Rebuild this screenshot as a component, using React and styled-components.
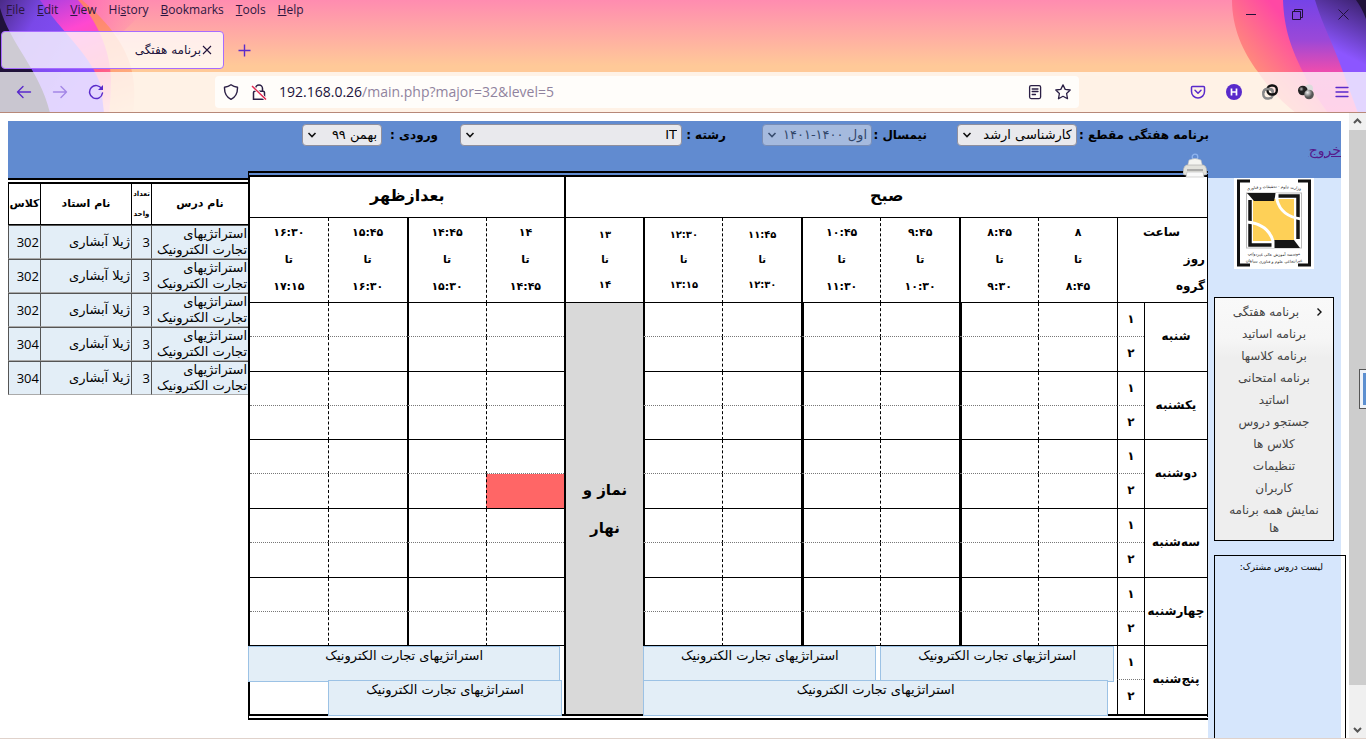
import React from "react";
import styled, { createGlobalStyle } from "styled-components";

const fa = `"DejaVu Sans", sans-serif`;
const ui = `"Open Sans", "Noto Sans", "DejaVu Sans", sans-serif`;

const Global = createGlobalStyle`
  * { box-sizing: border-box; }
  body { margin: 0; background: #fff; font-family: ${fa}; color: #000; }
`;

const Window = styled.div`
  display: flex;
  flex-direction: column;
  min-height: 100vh;
`;

/* ---------- browser chrome ---------- */
const Chrome = styled.header`
  position: relative;
  overflow: hidden;
  border-bottom: 1px solid #b78878;
  background: linear-gradient(#ff8cb0 0px, #ffc998 66px, #ffc998 100%);
`;
const Waves = styled.svg`
  position: absolute;
  top: 0;
  height: 113px;
  width: 150px;
  ${(p) => p.$side}: 0;
`;
const TitleArea = styled.div`
  position: relative;
  display: flex;
  justify-content: space-between;
  height: 28px;
`;
const MenuBar = styled.nav`
  display: flex;
  gap: 12px;
  padding-left: 6px;
`;
const MenuItem = styled.button`
  border: 0;
  padding: 0;
  background: none;
  height: 20px;
  font: 12px/20px ${ui};
  color: #2b1640;
`;
const WindowButtons = styled.div`
  display: flex;
  width: 138px;
`;
const WinButton = styled.button`
  flex: 1;
  border: 0;
  padding: 0;
  background: none;
  display: flex;
  align-items: center;
  justify-content: center;
  color: #20123a;
`;
const TabStrip = styled.div`
  position: relative;
  display: flex;
  align-items: center;
  gap: 12px;
  height: 44px;
  padding: 0 1px;
`;
const Tab = styled.div`
  display: flex;
  align-items: center;
  justify-content: flex-end;
  width: 223px;
  height: 38px;
  padding-right: 10px;
  border: 1px solid #a76cff;
  border-radius: 4px;
  background: rgba(255, 255, 255, 0.78);
  font: 12px/20px ${fa};
  color: #20123a;
`;
const IconButton = styled.button`
  border: 0;
  padding: 0;
  background: none;
  display: flex;
  align-items: center;
  justify-content: center;
  width: ${(p) => p.$w || 16}px;
  height: ${(p) => p.$w || 16}px;
  color: ${(p) => p.$c || "#592acb"};
  opacity: ${(p) => (p.disabled ? 0.45 : 1)};
`;
const Toolbar = styled.div`
  position: relative;
  display: flex;
  align-items: center;
  justify-content: space-between;
  height: 40px;
  padding: 0 16px;
  background: rgba(255, 255, 255, 0.76);
`;
const ToolGroup = styled.div`
  display: flex;
  gap: 20px;
  width: 199px;
  justify-content: ${(p) => (p.$end ? "flex-end" : "flex-start")};
`;
const UrlBar = styled.div`
  display: flex;
  align-items: center;
  flex: 1;
  height: 32px;
  margin-right: 72px;
  padding: 0 8px;
  gap: 12px;
  border-radius: 4px;
  background: rgba(255, 255, 255, 0.8);
`;
const Url = styled.div`
  flex: 1;
  font: 14px/20px ${ui};
  color: #20123a;
  span { color: #90839e; }
`;

/* ---------- viewport ---------- */
const Viewport = styled.div`
  flex: 1;
  display: flex;
  border-bottom: 1px solid #e0d2cb;
`;
const Page = styled.main`
  flex: 1;
  min-width: 0;
  display: flex;
  flex-direction: column;
  padding: 8px 8px 0;
  direction: rtl;
`;
const ScrollBar = styled.div`
  position: relative;
  width: 17px;
  display: flex;
  flex-direction: column;
  align-items: center;
  background: #f0f0f0;
`;
const ScrollArrow = styled.svg`
  width: 17px;
  height: 17px;
  flex: none;
`;
const Thumb = styled.div`
  flex: 555;
  width: 17px;
  background: #cdcdcd;
`;
const Gap = styled.div`
  flex: 36;
`;
const EdgeWidget = styled.div`
  position: absolute;
  top: 256px;
  right: 0;
  width: 7px;
  height: 40px;
  border: 1px solid #555;
  border-right: 0;
  background: #5c8fd0;
  box-shadow: inset 3px 3px 0 #eef2f8, inset 0 -3px 0 #eef2f8;
`;

/* ---------- banner ---------- */
const Banner = styled.div`
  display: grid;
  grid-template-columns: 132px 1fr;
  height: 57px;
  background: #618bd0;
`;
const Exit = styled.a`
  justify-self: start;
  padding-top: 18px;
  font-size: 14px;
  line-height: 22px;
  color: #551a8b;
`;
const Filters = styled.form`
  display: flex;
  align-items: center;
  height: 28px;
`;
const Field = styled.div`
  display: flex;
  align-items: center;
  justify-content: space-between;
  width: ${(p) => p.$w}px;
  margin-left: ${(p) => p.$gap}px;
`;
const FieldLabel = styled.label`
  font-size: 12px;
  font-weight: bold;
  line-height: 24px;
  white-space: nowrap;
`;
const SelectBox = styled.div`
  position: relative;
  flex: none;
  width: ${(p) => p.$w}px;
  opacity: ${(p) => (p.$off ? 0.5 : 1)};
`;
const Select = styled.select`
  appearance: none;
  display: block;
  width: 100%;
  height: 22px;
  padding: 0 4px 0 18px;
  border: 1px solid #8f8f9d;
  border-radius: 4px;
  background: #e9e9ed;
  font: 13px/18px ${fa};
  color: #000;
  opacity: 1;
`;
const Chevron = styled.svg`
  position: absolute;
  left: 5px;
  top: 6px;
  width: 10px;
  height: 10px;
  pointer-events: none;
`;

/* ---------- columns ---------- */
const Columns = styled.div`
  flex: 1;
  display: grid;
  grid-template-columns: 133px 1fr 240px;
`;
const Sidebar = styled.aside`
  display: flex;
  flex-direction: column;
  background: #d6e6fc;
  padding: 0 7px 0 6px;
`;
const Logo = styled.svg`
  display: block;
  align-self: center;
  width: 80px;
  height: 91px;
`;
const SideMenu = styled.ul`
  list-style: none;
  margin: 28px 0 14px;
  padding: 3px 8px 1px;
  border: 1px solid #000;
  background: linear-gradient(#f9f9f9 0px, #f6f6f6 40px, #eee 60px);
  text-align: center;
`;
const SideItem = styled.li`
  position: relative;
  padding: 2px 0;
  font-size: 12px;
  line-height: 18px;
  padding-right: ${(p) => (p.$active ? 16 : 0)}px;
  a { color: #444; text-decoration: none; }
  svg { position: absolute; right: 1px; top: 6px; }
`;
const SharedList = styled.section`
  flex: 1;
  width: 132px;
  padding: 3px 22px;
  border: 1px solid #000;
  border-bottom: 0;
  align-self: flex-end;
  font-size: 9px;
  line-height: 16px;
  white-space: nowrap;
`;

/* ---------- timetable ---------- */
const Board = styled.div`
  position: relative;
  margin-top: -7px;
`;
const Printer = styled.button`
  position: absolute;
  top: -18px;
  right: 0;
  border: 0;
  padding: 0;
  background: none;
  svg { display: block; }
`;
const Timetable = styled.table`
  width: 100%;
  table-layout: fixed;
  border-collapse: separate;
  border-spacing: 0;
  border-style: double solid;
  border-width: 6px 1px 6px 2px;
  border-color: #000;
  background: #fff;
  background-clip: padding-box;
  th, td { text-align: center; }
  td { padding: 0; }
  th { padding: 0 0 2px; }
`;
const LINES = {
  none: "0 none",
  dash: "1px dashed #000",
  thick: "2px solid #000",
  heavy: "3px solid #000",
};
const Period = styled.th`
  height: 41px;
  border-bottom: 1px solid #000;
  border-left: ${(p) => LINES[p.$line]};
  font-size: 16px;
  line-height: 30px;
`;
const Hour = styled.th`
  height: 85px;
  border-bottom: 1px solid #000;
  border-left: ${(p) => LINES[p.$line]};
  font-size: ${(p) => (p.$small ? 10 : 11)}px;
  line-height: ${(p) => (p.$small ? 25 : 27)}px;
`;
const Corner = styled.th`
  border-bottom: 1px solid #000;
  border-left: 1px solid #000;
  font-size: 12px;
  line-height: 27px;
  div { padding-right: 2px; text-align: right; }
  div:first-child { text-align: center; }
`;
const Row = styled.tr`
  height: ${(p) => p.$h}px;
`;
const Day = styled.th`
  border-bottom: ${(p) => (p.$last ? "0" : "1px solid #000")};
  border-left: 1px solid #000;
  font-size: 12px;
`;
const bottomLine = (p) =>
  p.$last ? "0" : p.$first ? "1px dotted #777" : "1px solid #000";
const Group = styled.th`
  border-left: 1px solid #000;
  border-bottom: ${bottomLine};
  font-size: 12px;
  line-height: 20px;
`;
const Slot = styled.td`
  border-left: ${(p) => LINES[p.$line]};
  border-bottom: ${bottomLine};
  background: ${(p) => (p.$busy ? "#f66" : "transparent")};
`;
const Lunch = styled.td`
  border-left: 2px solid #000;
  background: #d9d9d9;
  font-size: 15px;
  font-weight: bold;
  line-height: 38px;
`;
const EventCell = styled.td`
  height: 34px;
  vertical-align: top;
`;
const Event = styled.div`
  position: relative;
  height: 36px;
  margin: 0 ${(p) => p.$lead}px -2px ${(p) => (p.$edge ? -2 : 0)}px;
  border: 1px solid #9cc2e5;
  background: #e3eef7;
  font-size: 13px;
  line-height: 18px;
`;

/* ---------- course list ---------- */
const CourseTable = styled.table`
  width: 100%;
  table-layout: fixed;
  border-collapse: separate;
  border-spacing: 0;
  border-top: 6px double #000;
  align-self: start;
  td { padding: 0 1px; }
  th { padding: 0; }
`;
const CourseHead = styled.th`
  height: 41px;
  border-bottom: 1px solid #000;
  border-left: 1px solid #000;
  font-size: ${(p) => (p.$small ? 7 : 11)}px;
  line-height: 20px;
`;
const CourseCell = styled.td`
  height: 34px;
  border-left: 1px solid #555;
  border-top: 1px solid #555;
  border-bottom: 1px solid #aaa;
  background: #e3eef7;
  font-family: ${(p) => (p.$num ? ui : fa)};
  font-size: 13px;
  line-height: 16px;
  text-align: right;
`;

const COLS = ["dash", "heavy", "dash", "heavy", "dash", "thick", "thick", "dash", "thick", "dash", "none"];
const HOURS = [
  ["۸", "۸:۴۵"], ["۸:۴۵", "۹:۳۰"], ["۹:۴۵", "۱۰:۳۰"], ["۱۰:۴۵", "۱۱:۳۰"],
  ["۱۱:۴۵", "۱۲:۳۰"], ["۱۲:۳۰", "۱۳:۱۵"], ["۱۳", "۱۴"], ["۱۴", "۱۴:۴۵"],
  ["۱۴:۴۵", "۱۵:۳۰"], ["۱۵:۴۵", "۱۶:۳۰"], ["۱۶:۳۰", "۱۷:۱۵"],
];
const DAYS = ["شنبه", "یکشنبه", "دوشنبه", "سه‌شنبه", "چهارشنبه", "پنج‌شنبه"];
const COURSE = "استراتژیهای تجارت الکترونیک";
const EVENTS = {
  "5-0": { 0: [3, 3], 3: [3, 4], 7: [4, 4] },
  "5-1": { 0: [6, 9], 7: [3, 2] },
};
const MENU = [
  "برنامه هفتگی", "برنامه اساتید", "برنامه کلاسها", "برنامه امتحانی", "اساتید",
  "جستجو دروس", "کلاس ها", "تنظیمات", "کاربران", "نمایش همه برنامه ها",
];
const ROOMS = ["302", "302", "302", "304", "304"];

function SlotRow({ day, half }) {
  const events = EVENTS[`${day}-${half}`] || {};
  const out = [];
  let c = 0;
  while (c < 11) {
    if (c === 6) {
      if (day === 0 && half === 0)
        out.push(<Lunch key="lunch" rowSpan={12}>نماز و<br />نهار</Lunch>);
      c += 1;
    } else if (events[c]) {
      const [span, lead] = events[c];
      out.push(
        <EventCell key={c} colSpan={span}>
          <Event $lead={lead} $edge={c + span === 11}>{COURSE}</Event>
        </EventCell>
      );
      c += span;
    } else {
      out.push(
        <Slot key={c} $line={COLS[c]} $first={half === 0} $last={day === 5 && half === 1}
          $busy={day === 2 && half === 1 && c === 7} />
      );
      c += 1;
    }
  }
  return out;
}

function Picker({ id, label, value, w, total, gap, disabled }) {
  return (
    <Field $w={total} $gap={gap}>
      <FieldLabel htmlFor={id}>{label} :</FieldLabel>
      <SelectBox $w={w} $off={disabled}>
        <Select id={id} disabled={disabled} defaultValue={value}>
          <option>{value}</option>
        </Select>
        <Chevron viewBox="0 0 10 10">
          <path d="M1.5 3 L5 6.5 L8.5 3" fill="none" stroke="#111" strokeWidth="1.6" />
        </Chevron>
      </SelectBox>
    </Field>
  );
}

function BrowserChrome() {
  return (
    <Chrome>
      <Waves $side="left" viewBox="0 0 150 113">
        <defs>
          <linearGradient id="lv" x1="0" y1="0" x2="0.9" y2="0.6">
            <stop offset="0" stopColor="#4a2a86" /><stop offset="0.35" stopColor="#7a48e8" /><stop offset="1" stopColor="#8a52ff" />
          </linearGradient>
          <linearGradient id="lp" gradientUnits="userSpaceOnUse" x1="45" y1="0" x2="90" y2="113">
            <stop offset="0" stopColor="#b03fe0" /><stop offset="0.3" stopColor="#ff48d0" /><stop offset="0.7" stopColor="#ff5a86" /><stop offset="1" stopColor="#ff9aa8" />
          </linearGradient>
          <linearGradient id="lo" gradientUnits="userSpaceOnUse" x1="80" y1="0" x2="120" y2="113">
            <stop offset="0" stopColor="#ff7a70" /><stop offset="0.5" stopColor="#ff9a70" /><stop offset="1" stopColor="#ffc090" />
          </linearGradient>
          <linearGradient id="lg" x1="0" y1="0" x2="1" y2="0">
            <stop offset="0" stopColor="#ff60b8" /><stop offset="1" stopColor="#ff8cb0" stopOpacity="0" />
          </linearGradient>
        </defs>
        <path d="M70 0H150C142 14 132 24 118 36Z" fill="url(#lg)" />
        <path d="M60 0H82C108 22 132 50 134 85Q135 100 133 113H60Z" fill="url(#lo)" />
        <path d="M40 0H78C96 20 110 48 111 80Q111 98 109 113H40Z" fill="url(#lp)" />
        <path d="M0 0H40C60 30 92 56 101 86L104 113H0Z" fill="url(#lv)" />
        <path d="M0 8C10 44 40 70 50 113H0Z" fill="#20123a" />
      </Waves>
      <Waves $side="right" viewBox="1216 0 150 113">
        <defs>
          <linearGradient id="ro" gradientUnits="userSpaceOnUse" x1="1240" y1="60" x2="1286" y2="20">
            <stop offset="0" stopColor="#ff9078" /><stop offset="0.4" stopColor="#ff7488" /><stop offset="1" stopColor="#ff48a4" />
          </linearGradient>
          <linearGradient id="rv" x1="0" y1="0" x2="0" y2="1">
            <stop offset="0" stopColor="#7543e8" /><stop offset="0.35" stopColor="#9a48d8" /><stop offset="0.62" stopColor="#ea4cb0" /><stop offset="1" stopColor="#ff48a4" />
          </linearGradient>
          <linearGradient id="rl" gradientUnits="userSpaceOnUse" x1="1360" y1="0" x2="1335" y2="50">
            <stop offset="0" stopColor="#3c2270" /><stop offset="1" stopColor="#8c56ff" />
          </linearGradient>
        </defs>
        <path d="M1232 0C1232 28 1243 52 1258 72C1270 90 1284 104 1296 113H1366V0Z" fill="url(#ro)" />
        <path d="M1283 0C1284 30 1292 50 1303 72C1312 92 1322 104 1328 113H1366V0Z" fill="url(#rv)" />
        <path d="M1315 0C1322 24 1334 46 1343 72L1358 113H1366V0Z" fill="url(#rl)" />
        <path d="M1356 0Q1362 8 1366 19V0Z" fill="#20123a" />
      </Waves>
      <TitleArea>
        <MenuBar>
          {["File", "Edit", "View"].map((m) => (
            <MenuItem key={m}><u>{m[0]}</u>{m.slice(1)}</MenuItem>
          ))}
          <MenuItem>Hi<u>s</u>tory</MenuItem>
          {["Bookmarks", "Tools", "Help"].map((m) => (
            <MenuItem key={m}><u>{m[0]}</u>{m.slice(1)}</MenuItem>
          ))}
        </MenuBar>
        <WindowButtons>
          <WinButton aria-label="Minimize"><svg width="11" height="11"><path d="M0 5.500H10" stroke="currentColor" /></svg></WinButton>
          <WinButton aria-label="Restore"><svg width="11" height="11" fill="none" stroke="currentColor"><path d="M.5 2.500H8.500V10.500H.5ZM2.500 2.500V.5H10.500V8.500H8.500" /></svg></WinButton>
          <WinButton aria-label="Close"><svg width="11" height="11"><path d="M.5 .5L10.500 10.500M10.500 .5L.5 10.500" stroke="currentColor" /></svg></WinButton>
        </WindowButtons>
      </TitleArea>
      <TabStrip>
        <Tab>
          برنامه هفتگی
          <IconButton aria-label="Close tab" $w={12} $c="#20123a">
            <svg width="10" height="10"><path d="M1 1L9 9M9 1L1 9" stroke="currentColor" strokeWidth="1.100" /></svg>
          </IconButton>
        </Tab>
        <IconButton aria-label="New tab">
          <svg width="13" height="13"><path d="M6.500 .5V12.500M.5 6.500H12.500" stroke="currentColor" strokeWidth="1.400" /></svg>
        </IconButton>
      </TabStrip>
      <Toolbar>
        <ToolGroup>
          <IconButton aria-label="Back"><svg width="16" height="16" fill="none" stroke="currentColor" strokeWidth="1.400" strokeLinecap="round" strokeLinejoin="round"><path d="M14.500 8H1.500M7 2.500L1.500 8L7 13.500" /></svg></IconButton>
          <IconButton aria-label="Forward" disabled><svg width="16" height="16" fill="none" stroke="currentColor" strokeWidth="1.400" strokeLinecap="round" strokeLinejoin="round"><path d="M1.500 8H14.500M9 2.500L14.500 8L9 13.500" /></svg></IconButton>
          <IconButton aria-label="Reload"><svg width="16" height="16" fill="none" stroke="currentColor" strokeWidth="1.500"><path d="M13.800 5A6.500 6.500 0 1 0 14.500 9" strokeLinecap="round" /><path d="M15 1V6H10Z" fill="currentColor" stroke="none" /></svg></IconButton>
        </ToolGroup>
        <UrlBar>
          <IconButton as="span" $c="#2b1f45"><svg width="16" height="16" fill="none" stroke="currentColor" strokeWidth="1.400" strokeLinejoin="round"><path d="M8 .8C10 2.300 12 3 14.500 3.300C14.700 9 12.800 13 8 15.300C3.200 13 1.300 9 1.500 3.300C4 3 6 2.300 8 .8Z" /></svg></IconButton>
          <IconButton as="span" $c="#2b1f45"><svg width="16" height="16" fill="none" stroke="currentColor" strokeWidth="1.500"><path d="M4.500 7V4.500A3.500 3.500 0 0 1 11.500 4.500V7" /><path d="M2.500 15.200V8.500Q2.500 7.200 4 7.200H12Q13.500 7.200 13.500 8.500V13.500Q13.500 15.200 12 15.200Z" /><path d="M1 2L15 15.500" stroke="#fff" strokeWidth="3" /><path d="M1 2L15 15.500" stroke="#e22850" /></svg></IconButton>
          <Url>192.168.0.26<span>/main.php?major=32&amp;level=5</span></Url>
          <IconButton aria-label="Reader view" $c="#2b1f45"><svg width="16" height="16" fill="none" stroke="currentColor" strokeWidth="1.300" strokeLinecap="round"><rect x="2.600" y="1.600" width="11" height="13" rx="1.500" /><path d="M5.200 5H11M5.200 7.500H11M5.200 10.500H8.500" /></svg></IconButton>
          <IconButton aria-label="Bookmark" $c="#2b1f45"><svg width="16" height="16" fill="none" stroke="currentColor" strokeWidth="1.300" strokeLinejoin="round"><path d="M8 .9L10.200 5.400L15.200 6L11.600 9.500L12.500 14.700L8 12.300L3.500 14.700L4.400 9.500L.8 6L5.800 5.400Z" /></svg></IconButton>
        </UrlBar>
        <ToolGroup $end>
          <IconButton aria-label="Pocket"><svg width="16" height="16" fill="none" stroke="currentColor" strokeWidth="1.500" strokeLinecap="round" strokeLinejoin="round"><path d="M2.500 2.500H13.500Q14.500 2.500 14.500 3.500V7.500A6.500 6.500 0 0 1 1.500 7.500V3.500Q1.500 2.500 2.500 2.500ZM5 6.300L8 9.200L11 6.300" /></svg></IconButton>
          <IconButton aria-label="Account"><svg width="16" height="16"><circle cx="8" cy="8" r="8" fill="currentColor" /><path d="M5.500 4.500V11.500M10.500 4.500V11.500M5.500 8H10.500" stroke="#fff" strokeWidth="1.700" /></svg></IconButton>
          <IconButton aria-label="Links"><svg width="16" height="16" fill="none" strokeWidth="2.400"><rect x="1.300" y="5" width="9.500" height="9.500" rx="4" stroke="#888" /><rect x="5.500" y="1.500" width="9.300" height="9" rx="4" stroke="#111" /><path d="M1.500 9Q1.500 5 5.500 5H8Q10.800 5 10.800 8" stroke="#888" /></svg></IconButton>
          <IconButton aria-label="Extension"><svg width="16" height="16"><defs><radialGradient id="b1" cx=".35" cy=".35"><stop offset="0" stopColor="#bbb" /><stop offset=".5" stopColor="#222" /></radialGradient><radialGradient id="b2" cx=".35" cy=".3"><stop offset="0" stopColor="#eee" /><stop offset="1" stopColor="#555" /></radialGradient></defs><circle cx="11" cy="4.500" r="4" fill="#dcdcdc" /><circle cx="4.800" cy="6.500" r="4.800" fill="url(#b1)" /><circle cx="11" cy="10.500" r="4.800" fill="url(#b2)" /></svg></IconButton>
          <IconButton aria-label="Application menu"><svg width="14" height="14" stroke="currentColor" strokeWidth="1.300" strokeLinecap="round"><path d="M1 2.500H13M1 7H13M1 11.500H13" /></svg></IconButton>
        </ToolGroup>
      </Toolbar>
    </Chrome>
  );
}

function SchoolLogo() {
  return (
    <Logo viewBox="0 0 80 91" role="img" aria-label="logo">
      <defs>
        <path id="arcTop" d="M2 14Q40 6 78 14" />
        <path id="arcB1" d="M5 76Q40 80 75 76" />
        <path id="arcB2" d="M2 83Q40 87 78 83" />
      </defs>
      <rect width="80" height="91" fill="#fff" />
      <path d="M16 3H4.500V87H16M64 3H75.500V87H64" fill="none" stroke="#111" strokeWidth="3" />
      <rect x="12.500" y="15" width="55" height="55" fill="#fff" stroke="#bbb" />
      <rect x="19" y="21" width="41" height="42" fill="#fed057" />
      <path d="M13 15H42L40 23H20Z M66 70H39L40 62H60Z" fill="#151515" />
      <path d="M16 22V67H38M44 18H64V61" fill="none" stroke="#151515" strokeWidth="3.500" />
      <path d="M43 15V22Q47 38 67 41M13 44Q34 46 39 63V70" fill="none" stroke="#fff" strokeWidth="3" />
      <g fontFamily="DejaVu Sans" fill="#222" textAnchor="middle" direction="rtl">
        <text fontSize="4"><textPath href="#arcTop" startOffset="50%">وزارت علوم - تحقیقات و فناوری</textPath></text>
        <text fontSize="4"><textPath href="#arcB1" startOffset="50%">موسسه آموزش عالی غیردولتی</textPath></text>
        <text fontSize="4"><textPath href="#arcB2" startOffset="50%">غیرانتفاعی علوم و فناوری سپاهان</textPath></text>
      </g>
    </Logo>
  );
}

export default function App() {
  return (
    <Window>
      <Global />
      <BrowserChrome />
      <Viewport>
        <Page lang="fa">
          <Banner>
            <Exit href="#exit">خروج</Exit>
            <Filters>
              <Picker id="level" label="برنامه هفتگی مقطع" value="کارشناسی ارشد" w={120} total={252} gap={30} />
              <Picker id="term" label="نیمسال" value="اول ۱۴۰۰-۱۴۰۱" w={110} total={165} gap={36} disabled />
              <Picker id="major" label="رشته" value="IT" w={222} total={266} gap={22} />
              <Picker id="entry" label="ورودی" value="بهمن ۹۹" w={80} total={136} gap={0} />
            </Filters>
          </Banner>
          <Columns>
            <Sidebar>
              <SchoolLogo />
              <SideMenu>
                {MENU.map((m, i) => (
                  <SideItem key={m} $active={i === 0}>
                    {i === 0 && <svg width="10" height="10"><path d="M3.500 1.500L7 5L3.500 8.500" fill="none" stroke="#111" strokeWidth="1.400" /></svg>}
                    <a href={`#m${i}`}>{m}</a>
                  </SideItem>
                ))}
              </SideMenu>
              <SharedList>لیست دروس مشترک:</SharedList>
            </Sidebar>
            <Board>
              <Timetable>
                <colgroup>
                  <col width="63" /><col width="27" />
                  {COLS.map((line, i) => <col key={i} width={line === "none" ? undefined : "8.25%"} />)}
                </colgroup>
                <tbody>
                  <tr>
                    <Period colSpan={9} $line="thick">صبح</Period>
                    <Period colSpan={4} $line="none">بعدازظهر</Period>
                  </tr>
                  <tr>
                    <Corner colSpan={2}><div>ساعت</div><div>روز</div><div>گروه</div></Corner>
                    {HOURS.map(([a, b], i) => (
                      <Hour key={i} $line={COLS[i] === "heavy" ? "thick" : COLS[i]} $small={i >= 4 && i <= 6}>
                        {a}<br />تا<br />{b}
                      </Hour>
                    ))}
                  </tr>
                  {DAYS.map((d, i) => [
                    <Row key={d + 1} $h={34}>
                      <Day rowSpan={2} $last={i === 5}>{d}</Day>
                      <Group $first>۱</Group>
                      {SlotRow({ day: i, half: 0 })}
                    </Row>,
                    <Row key={d + 2} $h={[35, 34, 35, 35, 34, 34][i]}>
                      <Group $last={i === 5}>۲</Group>
                      {SlotRow({ day: i, half: 1 })}
                    </Row>,
                  ])}
                </tbody>
              </Timetable>
              <Printer aria-label="Print">
                <svg width="25" height="25" viewBox="0 0 25 25">
                  <circle cx="12" cy="4" r="2.800" fill="none" stroke="#8fb4ee" strokeWidth="1.300" />
                  <path d="M6 7Q12 4 18 7L20 15H4Z" fill="#f4f4f0" stroke="#bbb" strokeWidth=".6" />
                  <path d="M3 12H21Q24 14 24 20Q24 22 22 22H2Q0 22 0 20Q0 14 3 12Z" fill="#e2e2dc" stroke="#aaa" strokeWidth=".6" />
                  <path d="M4 17H20" stroke="#999" strokeWidth="1.500" />
                  <path d="M4 19H20L21 24H3Z" fill="#fafafa" stroke="#bbb" strokeWidth=".6" />
                </svg>
              </Printer>
            </Board>
            <CourseTable>
              <colgroup><col /><col width="20" /><col width="91" /><col width="32" /></colgroup>
              <thead>
                <tr>
                  <CourseHead>نام درس</CourseHead>
                  <CourseHead $small>تعداد<br />واحد</CourseHead>
                  <CourseHead>نام استاد</CourseHead>
                  <CourseHead>کلاس</CourseHead>
                </tr>
              </thead>
              <tbody>
                {ROOMS.map((r, i) => (
                  <tr key={i}>
                    <CourseCell>{COURSE}</CourseCell>
                    <CourseCell $num>3</CourseCell>
                    <CourseCell>ژیلا آبشاری</CourseCell>
                    <CourseCell $num>{r}</CourseCell>
                  </tr>
                ))}
              </tbody>
            </CourseTable>
          </Columns>
        </Page>
        <ScrollBar>
          <ScrollArrow viewBox="0 0 17 17"><path d="M5 10L8.500 6.500L12 10" fill="none" stroke="#555" strokeWidth="2" /></ScrollArrow>
          <Thumb />
          <Gap />
          <ScrollArrow viewBox="0 0 17 17"><path d="M5 7L8.500 10.500L12 7" fill="none" stroke="#555" strokeWidth="2" /></ScrollArrow>
          <EdgeWidget />
        </ScrollBar>
      </Viewport>
    </Window>
  );
}
